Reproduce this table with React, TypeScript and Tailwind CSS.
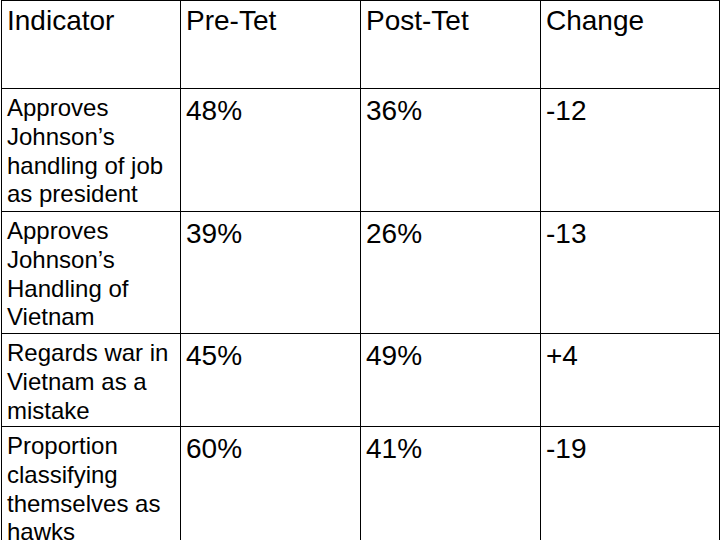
const rows = [
  { label: "Approves Johnson’s handling of job as president", pre: "48%", post: "36%", change: "-12", h: "h-[123px]" },
  { label: "Approves Johnson’s Handling of Vietnam", pre: "39%", post: "26%", change: "-13", h: "h-[122px]" },
  { label: "Regards war in Vietnam as a mistake", pre: "45%", post: "49%", change: "+4", h: "h-[93px]" },
  { label: "Proportion classifying themselves as hawks", pre: "60%", post: "41%", change: "-19", h: "h-[150px]" },
];

const cell = "border-r border-b border-black pl-[5px] pr-[5px]";

export default function App() {
  return (
    <div
      className="h-[540px] w-[720px] overflow-hidden bg-white pl-px text-black"
      style={{ fontFamily: '"Liberation Sans", Arial, sans-serif' }}
    >
      <div className="grid w-[719px] grid-cols-[179px_180px_180px_179px] border-l border-t border-black">
        {/* header */}
        {["Indicator", "Pre-Tet", "Post-Tet", "Change"].map((h) => (
          <div key={h} className={`${cell} h-[88px] pt-[3px] text-[28px] leading-[34px]`}>
            {h}
          </div>
        ))}

        {rows.map((r) => (
          <Row key={r.label} {...r} />
        ))}
      </div>
    </div>
  );
}

function Row({
  label,
  pre,
  post,
  change,
  h,
}: {
  label: string;
  pre: string;
  post: string;
  change: string;
  h: string;
}) {
  return (
    <>
      <div className={`${cell} ${h} pt-[5px] text-[24px] leading-[28.8px]`}>{label}</div>
      {[pre, post, change].map((v, i) => (
        <div key={i} className={`${cell} ${h} pt-[5px] text-[28px] leading-[34px]`}>
          {v}
        </div>
      ))}
    </>
  );
}
